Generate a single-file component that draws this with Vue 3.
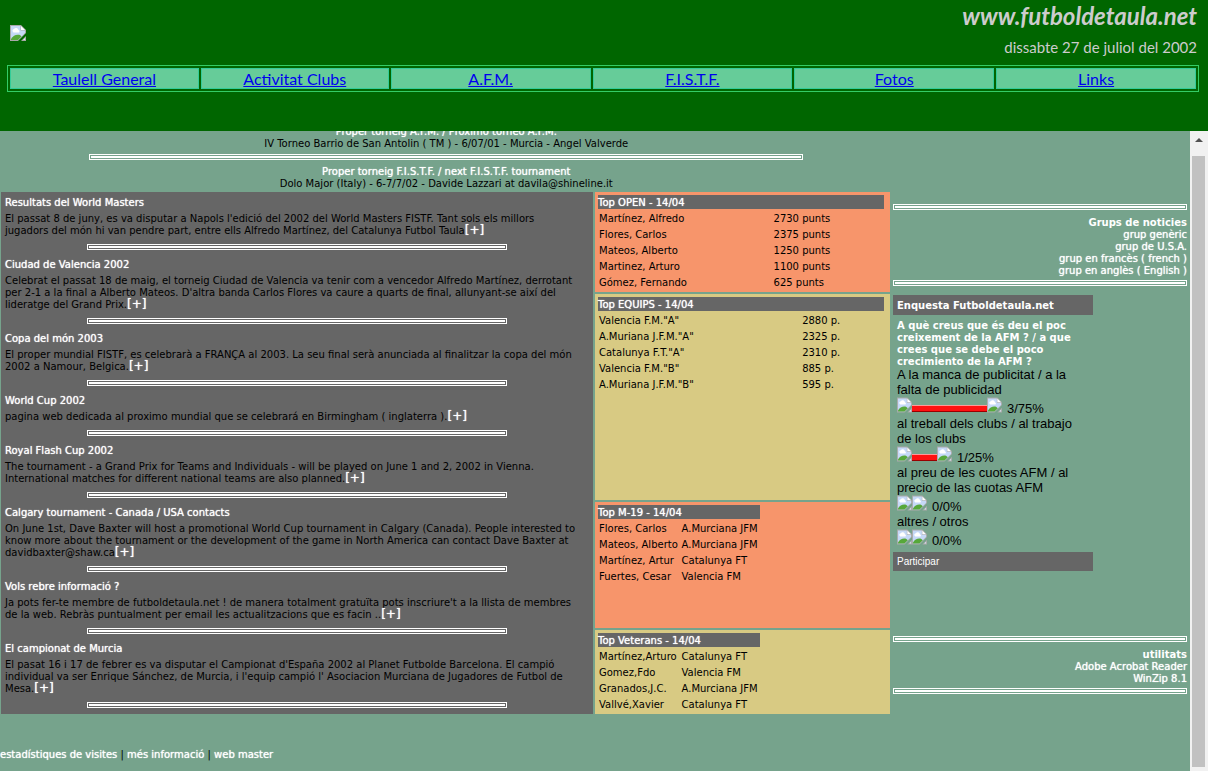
<script setup>
const sections = [
  { label: 'Taulell General' },
  { label: 'Activitat Clubs' },
  { label: 'A.F.M.' },
  { label: 'F.I.S.T.F.' },
  { label: 'Fotos' },
  { label: 'Links' }
]

const news = [
  {
    title: 'Resultats del World Masters',
    lines: [
      "El passat 8 de juny, es va disputar a Napols l'edició del 2002 del World Masters FISTF. Tant sols els millors",
      'jugadors del món hi van pendre part, entre ells Alfredo Martínez, del Catalunya Futbol Taula'
    ]
  },
  {
    title: 'Ciudad de Valencia 2002',
    lines: [
      'Celebrat el passat 18 de maig, el torneig Ciudad de Valencia va tenir com a vencedor Alfredo Martínez, derrotant',
      "per 2-1 a la final a Alberto Mateos. D'altra banda Carlos Flores va caure a quarts de final, allunyant-se així del",
      'lideratge del Grand Prix.'
    ]
  },
  {
    title: 'Copa del món 2003',
    lines: [
      'El proper mundial FISTF, es celebrarà a FRANÇA al 2003. La seu final serà anunciada al finalitzar la copa del món',
      '2002 a Namour, Belgica.'
    ]
  },
  {
    title: 'World Cup 2002',
    lines: ['pagina web dedicada al proximo mundial que se celebrará en Birmingham ( inglaterra ).']
  },
  {
    title: 'Royal Flash Cup 2002',
    lines: [
      'The tournament - a Grand Prix for Teams and Individuals - will be played on June 1 and 2, 2002 in Vienna.',
      'International matches for different national teams are also planned.'
    ]
  },
  {
    title: 'Calgary tournament - Canada / USA contacts',
    lines: [
      'On June 1st, Dave Baxter will host a promotional World Cup tournament in Calgary (Canada). People interested to',
      'know more about the tournament or the development of the game in North America can contact Dave Baxter at',
      'davidbaxter@shaw.ca'
    ]
  },
  {
    title: 'Vols rebre informació ?',
    lines: [
      "Ja pots fer-te membre de futboldetaula.net ! de manera totalment gratuïta pots inscriure't a la llista de membres",
      'de la web. Rebràs puntualment per email les actualitzacions que es facin ..'
    ]
  },
  {
    title: 'El campionat de Murcia',
    lines: [
      "El pasat 16 i 17 de febrer es va disputar el Campionat d'España 2002 al Planet Futbolde Barcelona. El campió",
      "individual va ser Enrique Sánchez, de Murcia, i l'equip campió l' Asociacion Murciana de Jugadores de Futbol de",
      'Mesa.'
    ]
  }
]

const rankings = [
  {
    kind: 'open',
    title: 'Top OPEN - 14/04',
    rows: [
      ['Martínez, Alfredo', '2730 punts'],
      ['Flores, Carlos', '2375 punts'],
      ['Mateos, Alberto', '1250 punts'],
      ['Martinez, Arturo', '1100 punts'],
      ['Gómez, Fernando', '625 punts']
    ]
  },
  {
    kind: 'teams',
    title: 'Top EQUIPS - 14/04',
    rows: [
      ['Valencia F.M."A"', '2880 p.'],
      ['A.Muriana J.F.M."A"', '2325 p.'],
      ['Catalunya F.T."A"', '2310 p.'],
      ['Valencia F.M."B"', '885 p.'],
      ['A.Muriana J.F.M."B"', '595 p.']
    ]
  },
  {
    kind: 'junior',
    title: 'Top M-19 - 14/04',
    rows: [
      ['Flores, Carlos', 'A.Murciana JFM'],
      ['Mateos, Alberto', 'A.Murciana JFM'],
      ['Martínez, Artur', 'Catalunya FT'],
      ['Fuertes, Cesar', 'Valencia FM']
    ]
  },
  {
    kind: 'veteran',
    title: 'Top Veterans - 14/04',
    rows: [
      ['Martínez,Arturo', 'Catalunya FT'],
      ['Gomez,Fdo', 'Valencia FM'],
      ['Granados,J.C.', 'A.Murciana JFM'],
      ['Vallvé,Xavier', 'Catalunya FT']
    ]
  }
]

const groups = ['grup genèric', 'grup de U.S.A.', 'grup en francès ( french )', 'grup en anglès ( English )']

const answers = [
  { lines: ['A la manca de publicitat / a la', 'falta de publicidad'], votes: 3, percent: 75 },
  { lines: ['al treball dels clubs / al trabajo', 'de los clubs'], votes: 1, percent: 25 },
  { lines: ['al preu de les cuotes AFM / al', 'precio de las cuotas AFM'], votes: 0, percent: 0 },
  { lines: ['altres / otros'], votes: 0, percent: 0 }
]
</script>

<template>
  <div class="page">
    <svg class="defs" width="0" height="0" aria-hidden="true">
      <symbol id="missing" viewBox="0 0 16 16">
        <path d="M0 0H11L16 5V8L8 16H0Z" fill="#a9a9a9" />
        <path d="M16 11V16H11Z" fill="#a9a9a9" />
        <path d="M1 1H10.500V5.500H15V8L8 15H1Z" fill="#c6d9f7" />
        <path d="M3 7a2 2 0 0 1 1-3 2.500 2.500 0 0 1 4.500 1 1.500 1.500 0 0 1 .5 2.500H3.500Z" fill="#fff" />
        <path d="M1 15V14C3 10 7 9 10 10L11.500 11.500L8 15Z" fill="#57a83a" />
        <path d="M15 13V15H13Z" fill="#dfe9f8" />
        <path d="M11 1V5H15Z" fill="#fff" />
      </symbol>
    </svg>

    <header class="banner">
      <svg class="missing logo" role="img" aria-label="logo"><use href="#missing" /></svg>
      <div class="heading">
        <h1>www.futboldetaula.net</h1>
        <p>dissabte 27 de juliol del 2002</p>
      </div>
      <nav class="menu">
        <div v-for="s in sections" :key="s.label" class="menu-cell">
          <a href="#">{{ s.label }}</a>
        </div>
      </nav>
    </header>

    <div class="frame">
      <main class="content">
        <section class="next">
          <p><span class="lead">Proper torneig A.F.M. / Próximo torneo A.F.M.</span><br>IV Torneo Barrio de San Antolin ( TM ) - 6/07/01 - Murcia - Angel Valverde</p>
          <hr>
          <p><span class="lead">Proper torneig F.I.S.T.F. / next F.I.S.T.F. tournament</span><br>Dolo Major (Italy) - 6-7/7/02 - Davide Lazzari at davila@shineline.it</p>
        </section>

        <div class="columns">
          <section class="news">
            <article v-for="n in news" :key="n.title">
              <h2>{{ n.title }}</h2>
              <p>
                <template v-for="(line, i) in n.lines" :key="i"><br v-if="i">{{ line }}</template><a href="#">[+]</a>
              </p>
              <hr>
            </article>
          </section>

          <section class="rankings">
            <div v-for="r in rankings" :key="r.kind" class="card" :class="r.kind">
              <table>
                <thead>
                  <tr><th colspan="2">{{ r.title }}</th></tr>
                </thead>
                <tbody>
                  <tr v-for="row in r.rows" :key="row[0]">
                    <td>{{ row[0] }}</td>
                    <td>{{ row[1] }}</td>
                  </tr>
                </tbody>
              </table>
            </div>
          </section>

          <aside class="side">
            <hr>
            <div class="links">
              <h3>Grups de noticies</h3>
              <a v-for="g in groups" :key="g" href="#">{{ g }}</a>
            </div>
            <hr>
            <form class="poll" @submit.prevent>
              <h3>Enquesta Futboldetaula.net</h3>
              <p class="question">A què creus que és deu el poc<br>creixement de la AFM ? / a que<br>crees que se debe el poco<br>crecimiento de la AFM ?</p>
              <div v-for="(a, i) in answers" :key="i" class="answer">
                <p v-for="line in a.lines" :key="line">{{ line }}</p>
                <div class="result">
                  <svg class="missing"><use href="#missing" /></svg>
                  <span class="bar" :style="{ width: a.percent + 'px' }"></span>
                  <svg class="missing"><use href="#missing" /></svg>
                  <span class="score">{{ a.votes }}/{{ a.percent }}%</span>
                </div>
              </div>
              <button type="submit">Participar</button>
            </form>
            <hr>
            <div class="links">
              <h3>utilitats</h3>
              <a href="#">Adobe Acrobat Reader</a>
              <a href="#">WinZip 8.1</a>
            </div>
            <hr>
          </aside>
        </div>

        <footer><a href="#">estadístiques de visites</a> | <a href="#">més informació</a> | <a href="#">web master</a></footer>
      </main>

      <div class="scrollbar" aria-hidden="true">
        <svg class="arrow" viewBox="0 0 8 4"><path d="M4 0L8 4H0Z" fill="#505050" /></svg>
        <div class="thumb"></div>
      </div>
    </div>
  </div>
</template>

<style>
body {
  margin: 0;
  background: #76a38c;
}
</style>

<style scoped>
.page {
  display: flex;
  flex-direction: column;
  height: 100vh;
  overflow: hidden;
  font: 10px/12px Verdana, "DejaVu Sans", sans-serif;
  color: #000;
  background: #76a38c;
}
.defs {
  position: absolute;
}
h1, h2, h3, p {
  margin: 0;
}
hr {
  box-sizing: border-box;
  height: 6px;
  margin: 0;
  padding: 1px;
  border: 1px solid #fff;
  background: #fff content-box;
}
a {
  color: #fff;
  text-decoration: none;
}
a, h2, th, .lead {
  text-shadow: 0 0 1px #fff;
}
.missing {
  flex: none;
  display: block;
  width: 16px;
  height: 16px;
}

.banner {
  display: grid;
  grid-template-columns: auto 1fr;
  grid-template-rows: 65px auto;
  flex: none;
  box-sizing: border-box;
  height: 131px;
  padding: 0 9px 0 7px;
  background: #060;
  font-family: "Berlin Sans FB", Lato, sans-serif;
}
.logo {
  margin: 25px 0 0 3px;
}
.heading {
  padding-right: 2px;
  text-align: right;
  color: #ccc;
}
.heading h1 {
  padding-top: 3px;
  font-size: 24px;
  line-height: 26px;
  font-style: italic;
}
.heading p {
  margin-top: 8px;
  font-size: 15px;
  line-height: 20px;
}
.menu {
  grid-column: 1 / -1;
  align-self: start;
  display: grid;
  grid-template-columns: 189fr 188fr 200fr 200fr 200fr 200fr;
  gap: 2px;
  padding: 2px;
  border: 1px solid #3c6;
}
.menu-cell {
  border: 1px solid #3c9;
  background: #6c9;
  text-align: center;
  font-size: 16px;
  line-height: 19px;
}
.menu-cell a {
  color: #00e;
  text-decoration: underline;
  text-shadow: none;
}

.frame {
  flex: 1;
  display: flex;
  min-height: 0;
}
.content {
  flex: 1;
  min-width: 0;
  overflow: hidden;
}
.next {
  width: 75%;
  margin-top: -5px;
  text-align: center;
}
.next hr {
  width: 80%;
  margin: 4px auto 6px;
}
.lead {
  color: #fff;
}
.columns {
  display: grid;
  grid-template-columns: 592fr 295fr 298fr;
  gap: 2px;
  margin-top: 2px;
  padding-left: 1px;
}
.news {
  padding: 5px 4px 6px;
  background: #666;
  white-space: nowrap;
}
.news article + article {
  margin-top: 9px;
}
.news h2 {
  font-size: 10px;
  font-weight: normal;
  color: #fff;
}
.news p {
  margin-top: 4px;
}
.news a {
  font-size: 12px;
  line-height: 10px;
}
.news hr {
  width: 72%;
  margin: 7px auto 0;
}

.rankings {
  display: flex;
  flex-direction: column;
  gap: 2px;
}
.card {
  box-sizing: border-box;
  padding: 1px 3px;
  background: #f7956b;
}
.teams, .veteran {
  background: #d8ca83;
}
.teams {
  min-height: 206px;
}
.junior {
  min-height: 126px;
}
table {
  width: 56%;
  border-spacing: 0 2px;
  white-space: nowrap;
}
.open table, .teams table {
  width: 99%;
}
th, td {
  padding: 2px 1px 0;
}
th {
  padding-left: 0;
  background: #666;
  color: #fff;
  font-weight: normal;
  text-align: left;
}
td:first-child {
  width: 51%;
}
.open td:first-child {
  width: 61%;
}
.teams td:first-child {
  width: 71%;
}

.side {
  padding: 12px 3px 0 1px;
}
.links {
  display: flex;
  flex-direction: column;
  align-items: flex-end;
  margin: 7px 0 3px;
}
h3 {
  font-size: 10px;
  color: #fff;
}
.poll {
  width: 68%;
  margin: 9px 0 65px;
  white-space: nowrap;
}
.poll h3 {
  padding: 5px 4px 3px;
}
.poll h3, .poll button {
  background: #666;
}
.question {
  margin: 5px 0 -1px;
  padding-left: 4px;
  font-weight: bold;
  color: #fff;
}
.answer {
  padding-left: 4px;
  font: 13px/15px Arial, "Liberation Sans", sans-serif;
}
.result {
  display: flex;
  align-items: flex-end;
  height: 19px;
}
.result .missing {
  width: 15px;
  height: 16px;
  margin-bottom: 3px;
}
.bar {
  box-sizing: border-box;
  height: 7px;
  margin-bottom: 4px;
  border: solid #f99;
  border-width: 1px 0;
  border-bottom-color: #900;
  background: #f11;
}
.score {
  padding-left: 5px;
}
.poll button {
  display: block;
  width: 100%;
  margin-top: 4px;
  padding: 4px 4px 3px;
  border: 0;
  color: #fff;
  font: 10px/12px Arial, "Liberation Sans", sans-serif;
  text-align: left;
}
footer {
  margin-top: 35px;
}

.scrollbar {
  flex: none;
  display: flex;
  flex-direction: column;
  box-sizing: border-box;
  width: 18px;
  padding: 7px 3px 4px 2px;
  background: #f1f1f1;
}
.arrow {
  width: 8px;
  height: 4px;
  margin: 0 auto 14px;
}
.thumb {
  flex: 1;
  background: #c1c1c1;
}
</style>
